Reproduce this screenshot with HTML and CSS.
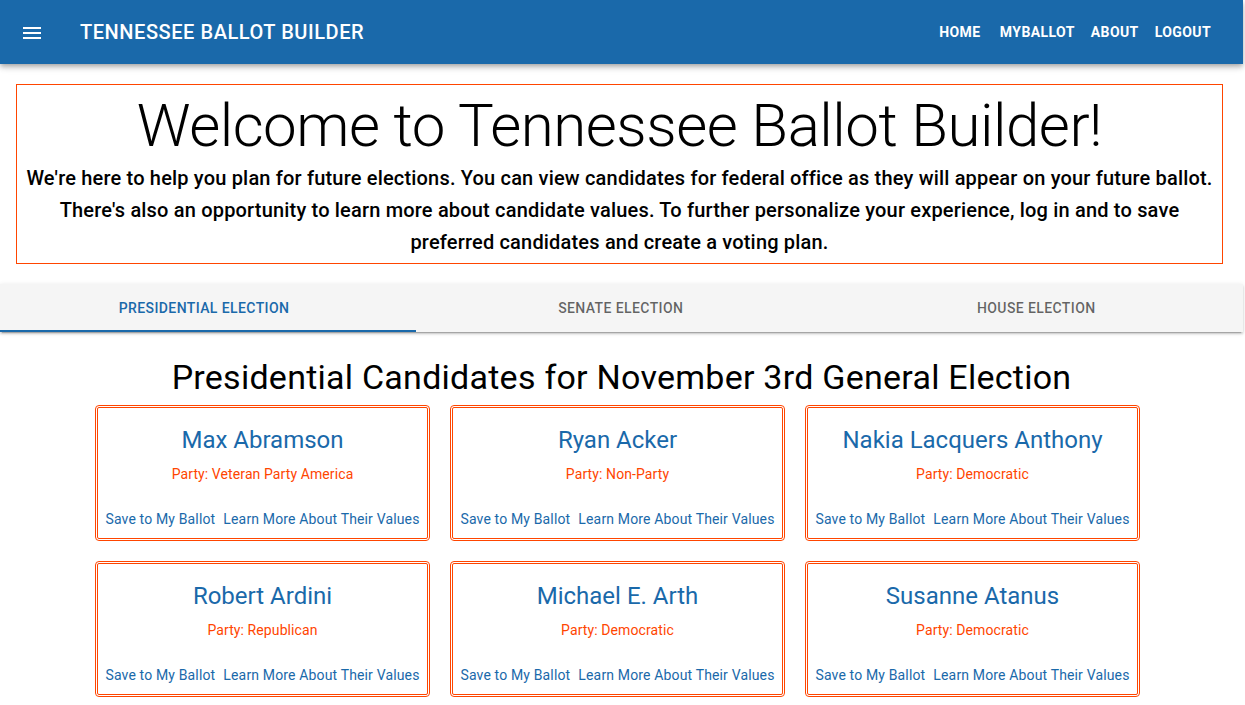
FILE: index.html
```html
<!DOCTYPE html>
<html lang="en">
<head>
<meta charset="utf-8">
<title>Tennessee Ballot Builder</title>
<link rel="stylesheet" href="styles.css">
</head>
<body>
<div class="app">
  <header class="topbar">
    <button class="menu-btn" aria-label="menu">
      <svg width="18" height="12" viewBox="0 0 18 12"><rect x="0" y="0" width="18" height="2" fill="#fff"/><rect x="0" y="5" width="18" height="2" fill="#fff"/><rect x="0" y="10" width="18" height="2" fill="#fff"/></svg>
    </button>
    <div class="brand">TENNESSEE BALLOT BUILDER</div>
    <nav class="nav">
      <a class="nav-btn">HOME</a>
      <a class="nav-btn">MYBALLOT</a>
      <a class="nav-btn">ABOUT</a>
      <a class="nav-btn">LOGOUT</a>
    </nav>
  </header>

  <section class="welcome">
    <h1 class="welcome-title">Welcome to Tennessee Ballot Builder!</h1>
    <p class="welcome-text">We're here to help you plan for future elections. You can view candidates for federal office as they will appear on your future ballot. There's also an opportunity to learn more about candidate values. To further personalize your experience, log in and to save preferred candidates and create a voting plan.</p>
  </section>

  <div class="tabs">
    <div class="tab tab-1 active">PRESIDENTIAL ELECTION</div>
    <div class="tab tab-2">SENATE ELECTION</div>
    <div class="tab tab-3">HOUSE ELECTION</div>
  </div>

  <h2 class="section-title">Presidential Candidates for November 3rd General Election</h2>

  <div class="cards">
    <div class="card">
      <div class="card-name">Max Abramson</div>
      <div class="card-party">Party: Veteran Party America</div>
      <div class="card-links"><a>Save to My Ballot</a><a>Learn More About Their Values</a></div>
    </div>
    <div class="card">
      <div class="card-name">Ryan Acker</div>
      <div class="card-party">Party: Non-Party</div>
      <div class="card-links"><a>Save to My Ballot</a><a>Learn More About Their Values</a></div>
    </div>
    <div class="card">
      <div class="card-name">Nakia Lacquers Anthony</div>
      <div class="card-party">Party: Democratic</div>
      <div class="card-links"><a>Save to My Ballot</a><a>Learn More About Their Values</a></div>
    </div>
    <div class="card">
      <div class="card-name">Robert Ardini</div>
      <div class="card-party">Party: Republican</div>
      <div class="card-links"><a>Save to My Ballot</a><a>Learn More About Their Values</a></div>
    </div>
    <div class="card">
      <div class="card-name">Michael E. Arth</div>
      <div class="card-party">Party: Democratic</div>
      <div class="card-links"><a>Save to My Ballot</a><a>Learn More About Their Values</a></div>
    </div>
    <div class="card">
      <div class="card-name">Susanne Atanus</div>
      <div class="card-party">Party: Democratic</div>
      <div class="card-links"><a>Save to My Ballot</a><a>Learn More About Their Values</a></div>
    </div>
  </div>
</div>
</body>
</html>
```

FILE: styles.css
```css
* { box-sizing: border-box; }
html, body { margin: 0; padding: 0; background: #fff; }
body {
  font-family: Roboto, "Liberation Sans", Arial, sans-serif;
  color: #000;
  overflow: hidden;
}
.app { width: 1243px; }

.topbar {
  height: 64px;
  background: #1a69aa;
  display: flex;
  align-items: center;
  padding: 0 16px 0 23px;
  box-shadow: 0 2px 4px -1px rgba(0,0,0,.2), 0 4px 5px 0 rgba(0,0,0,.14), 0 1px 10px 0 rgba(0,0,0,.12);
  position: relative;
  z-index: 2;
}
.menu-btn {
  background: none;
  border: 0;
  padding: 0;
  width: 18px;
  height: 12px;
  display: flex;
  margin-top: 1px;
}
.brand {
  margin-left: 39px;
  color: #fff;
  font-size: 20px;
  font-weight: 500;
  letter-spacing: 0.55px;
}
.nav { margin-left: auto; display: flex; margin-right: 8px; }
.nav-btn {
  color: #fff;
  font-size: 14px;
  font-weight: 700;
  letter-spacing: 0.4px;
  min-width: 64px;
  padding: 0 8px;
  text-align: center;
  line-height: 36px;
}

.welcome {
  margin: 20px 20px 0 16px;
  border: 1px solid #ff4500;
  padding: 5px 4px 5px;
  text-align: center;
}
.welcome-title {
  margin: 0;
  font-size: 60px;
  font-weight: 300;
  line-height: 72px;
  letter-spacing: -0.5px;
}
.welcome-text {
  margin: 0;
  font-size: 20px;
  font-weight: 500;
  line-height: 32px;
  letter-spacing: 0.18px;
}

.tabs {
  margin-top: 20px;
  height: 48px;
  display: flex;
  background: #f5f5f5;
  box-shadow: 0 3px 1px -2px rgba(0,0,0,.2), 0 2px 2px 0 rgba(0,0,0,.14), 0 1px 5px 0 rgba(0,0,0,.12);
}
.tab {
  flex: 1;
  display: flex;
  align-items: center;
  justify-content: center;
  font-size: 14px;
  font-weight: 500;
  letter-spacing: 0.4px;
  color: rgba(0,0,0,.6);
}
.tab-1 { padding-right: 8px; }
.tab-2 { padding-right: 6px; }
.tab-3 { padding-right: 2px; }
.tab.active {
  flex: 0 0 416px;
  color: #1a69aa;
  border-bottom: 2px solid #1a69aa;
  padding-top: 2px;
}

.section-title {
  margin: 25px 0 8px;
  text-align: center;
  font-size: 34px;
  font-weight: 400;
  line-height: 40px;
  letter-spacing: 0.25px;
}

.cards {
  width: 1045px;
  margin-left: 95px;
  display: grid;
  grid-template-columns: repeat(3, 335px);
  gap: 20px;
}
.card {
  border: 3px double #ff4500;
  border-radius: 4px;
  padding: 16px 2px 9px;
  text-align: center;
}
.card-name {
  color: #1a69aa;
  font-size: 24px;
  line-height: 32px;
}
.card-party {
  color: #ff4500;
  font-size: 14px;
  line-height: 20px;
  margin-top: 8px;
  letter-spacing: 0.1px;
}
.card-links {
  margin-top: 25px;
  display: flex;
  justify-content: center;
  gap: 8px;
  font-size: 14px;
  line-height: 20px;
  letter-spacing: 0.15px;
  color: #1a69aa;
}
```
